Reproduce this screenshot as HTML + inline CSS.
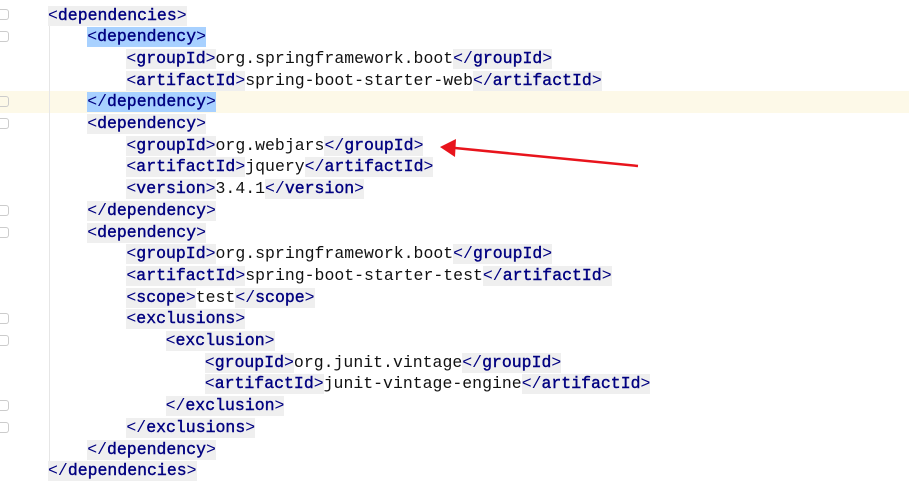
<!DOCTYPE html>
<html><head><style>
body{margin:0;width:909px;height:481px;background:#fff;overflow:hidden;position:relative;font-family:"Liberation Mono","DejaVu Sans Mono",monospace;font-size:16.5px;}
.l{position:absolute;left:0;width:909px;height:21.7px;line-height:21.7px;white-space:pre;color:#111;}
.t{background:#efefef;color:#000080;display:inline-block;height:20px;line-height:20px;}
.t b{font-weight:normal;-webkit-text-stroke:0.4px #000080;}
.s{background:#a8d1ff;}
.cur{background:#fdf9e8;}
.g{position:absolute;left:0;width:8px;height:9px;border:1px solid #ccc;border-left:none;border-radius:0 3px 3px 0;}
.guide{position:absolute;left:49px;top:24px;width:1px;height:445px;background:#e6e6e6;}
</style></head><body>
<div class="l cur" style="top:91px"></div>
<div class="guide"></div>
<div id="c"></div>
<script>
var L=[
[0,"o","dependencies"],
[1,"o","dependency",1],
[2,"e","groupId","org.springframework.boot"],
[2,"e","artifactId","spring-boot-starter-web"],
[1,"c","dependency",1],
[1,"o","dependency"],
[2,"e","groupId","org.webjars"],
[2,"e","artifactId","jquery"],
[2,"e","version","3.4.1"],
[1,"c","dependency"],
[1,"o","dependency"],
[2,"e","groupId","org.springframework.boot"],
[2,"e","artifactId","spring-boot-starter-test"],
[2,"e","scope","test"],
[2,"o","exclusions"],
[3,"o","exclusion"],
[4,"e","groupId","org.junit.vintage"],
[4,"e","artifactId","junit-vintage-engine"],
[3,"c","exclusion"],
[2,"c","exclusions"],
[1,"c","dependency"],
[0,"c","dependencies"]];
var h="";
L.forEach(function(r,i){
 var top=4.5+i*21.7, left=48+r[0]*39.2;
 var s="";
 if(r[1]=="o") s='<span class="t'+(r[3]?' s':'')+'">&lt;<b>'+r[2]+'</b>&gt;</span>';
 else if(r[1]=="c") s='<span class="t'+(r[3]?' s':'')+'">&lt;/<b>'+r[2]+'</b>&gt;</span>';
 else s='<span class="t">&lt;<b>'+r[2]+'</b>&gt;</span>'+r[3]+'<span class="t">&lt;/<b>'+r[2]+'</b>&gt;</span>';
 h+='<div class="l" style="top:'+top+'px;left:'+left+'px;width:auto">'+s+'</div>';
});
[9,31,96,118,205,227,313,335,400,422].forEach(function(y){h+='<div class="g" style="top:'+y+'px"></div>';});
document.getElementById("c").innerHTML=h;
</script>
<svg style="position:absolute;left:0;top:0" width="909" height="481">
<line x1="638" y1="166" x2="455" y2="148" stroke="#e8141c" stroke-width="2.5"/>
<polygon points="440,147 456,139 455,157" fill="#e8141c"/>
</svg>
</body></html>
